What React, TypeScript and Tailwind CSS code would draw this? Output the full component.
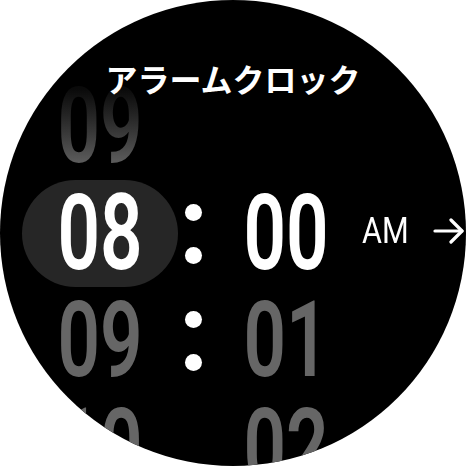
const digit = "text-[105px] leading-[107px] font-semibold scale-x-[0.71] [font-family:Roboto,'Liberation_Sans',sans-serif]";

function Colon() {
  return (
    <div className="flex h-[107px] flex-col items-center justify-center gap-[26px]">
      <div className="size-[17px] rounded-full bg-white" />
      <div className="size-[17px] rounded-full bg-white" />
    </div>
  );
}

function ArrowRight() {
  return (
    <svg width="32" height="26" viewBox="0 0 32 26" fill="none" stroke="white" strokeWidth="3.2" strokeLinecap="round" strokeLinejoin="round">
      <path d="M2 13h27" />
      <path d="M18 2l11 11-11 11" />
    </svg>
  );
}

export default function App() {
  return (
    <div className="h-[466px] w-[466px] bg-white">
      <div className="relative h-[466px] w-[466px] overflow-hidden rounded-full bg-black pt-[73px] select-none">
        <div className="flex">
          {/* hours */}
          <div className="ml-[22px] flex w-[156px] flex-col">
            <div className="flex h-[107px] items-center justify-center">
              <span className={`${digit} bg-gradient-to-b from-[#0a0a0a] from-[15%] to-[#5e5e5e] to-[85%] bg-clip-text text-transparent`}>09</span>
            </div>
            <div className="flex h-[107px] items-center justify-center rounded-full bg-[#262626]">
              <span className={`${digit} text-white`}>08</span>
            </div>
            <div className="flex h-[107px] items-center justify-center">
              <span className={`${digit} text-[#666666]`}>09</span>
            </div>
            <div className="flex h-[107px] items-center justify-center">
              <span className={`${digit} text-[#666666]`}>10</span>
            </div>
          </div>

          {/* colons */}
          <div className="flex w-[31px] flex-col">
            <div className="h-[107px]" />
            <Colon />
            <Colon />
          </div>

          {/* minutes */}
          <div className="flex w-[153px] flex-col">
            <div className="h-[107px]" />
            <div className="flex h-[107px] items-center justify-center">
              <span className={`${digit} text-white`}>00</span>
            </div>
            <div className="flex h-[107px] items-center justify-center">
              <span className={`${digit} text-[#666666]`}>01</span>
            </div>
            <div className="flex h-[107px] items-center justify-center">
              <span className={`${digit} text-[#666666]`}>02</span>
            </div>
          </div>

          {/* am / pm */}
          <div className="flex flex-col">
            <div className="h-[107px]" />
            <div className="flex h-[101px] items-center gap-[16px]">
              <span className="origin-left scale-x-[0.85] text-[36px] leading-none text-white [font-family:Roboto,'Liberation_Sans',sans-serif]">AM</span>
              <ArrowRight />
            </div>
          </div>
        </div>

        <h1 className="absolute inset-x-0 top-[62px] text-center text-[32px] leading-[32px] font-bold text-white [font-family:'Noto_Sans_CJK_JP',sans-serif]">
          アラームクロック
        </h1>
      </div>
    </div>
  );
}
